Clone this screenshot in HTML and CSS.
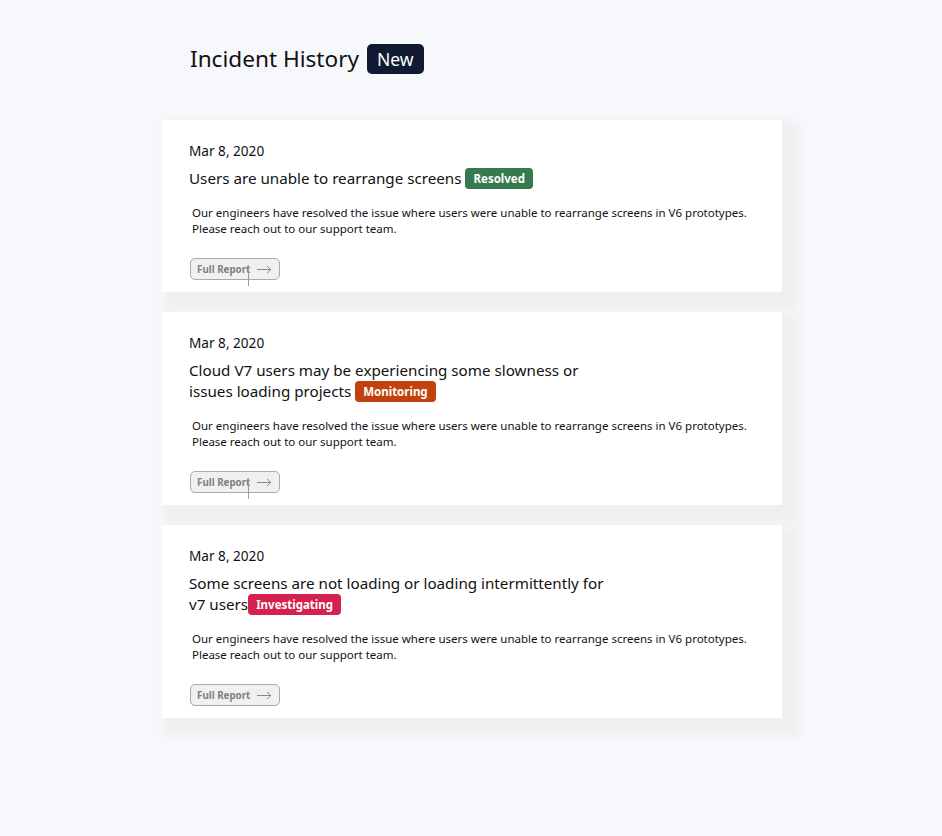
FILE: index.html
```html
<!DOCTYPE html>
<html lang="en">
<head>
  <meta charset="UTF-8">
  <title>Incident History</title>
  <link rel="stylesheet" href="styles.css">
</head>
<body>
  <div class="page">
    <header class="page-header">
      <h1>Incident History</h1>
      <span class="badge-new">New</span>
    </header>

    <div class="incident">
      <div class="date">Mar 8, 2020</div>
      <h2 class="title">Users are unable to rearrange screens <span class="status resolved">Resolved</span></h2>
      <p class="desc">Our engineers have resolved the issue where users were unable to rearrange screens in V6 prototypes.<br>Please reach out to our support team.</p>
      <button class="report">Full Report
        <svg class="arrow" width="15" height="9" viewBox="0 0 15 9"><path d="M0 4.5H14M10 1l3.8 3.5L10 8" fill="none" stroke="#888" stroke-width="1"/></svg>
        <span class="tick"></span>
      </button>
    </div>

    <div class="incident">
      <div class="date">Mar 8, 2020</div>
      <h2 class="title">Cloud V7 users may be experiencing some slowness or issues loading projects <span class="status monitoring">Monitoring</span></h2>
      <p class="desc">Our engineers have resolved the issue where users were unable to rearrange screens in V6 prototypes.<br>Please reach out to our support team.</p>
      <button class="report">Full Report
        <svg class="arrow" width="15" height="9" viewBox="0 0 15 9"><path d="M0 4.5H14M10 1l3.8 3.5L10 8" fill="none" stroke="#888" stroke-width="1"/></svg>
        <span class="tick"></span>
      </button>
    </div>

    <div class="incident">
      <div class="date">Mar 8, 2020</div>
      <h2 class="title">Some screens are not loading or loading intermittently for v7 users<span class="status investigating">Investigating</span></h2>
      <p class="desc">Our engineers have resolved the issue where users were unable to rearrange screens in V6 prototypes.<br>Please reach out to our support team.</p>
      <button class="report">Full Report
        <svg class="arrow" width="15" height="9" viewBox="0 0 15 9"><path d="M0 4.5H14M10 1l3.8 3.5L10 8" fill="none" stroke="#888" stroke-width="1"/></svg>
      </button>
    </div>
  </div>
</body>
</html>
```

FILE: styles.css
```css
* { box-sizing: border-box; margin: 0; padding: 0; }

body {
  font-family: "Noto Sans", Arial, sans-serif;
  background-color: #f7f8fc;
  color: #111;
}

.page {
  width: 620px;
  margin-left: 162px;
  padding-top: 44px;
}

.page-header {
  display: flex;
  align-items: center;
  padding-left: 28px;
  margin-bottom: 46px;
}

.page-header h1 {
  font-size: 22.6px;
  font-weight: normal;
  line-height: 30px;
}

.badge-new {
  margin-left: 8px;
  padding: 0 10px;
  height: 30px;
  line-height: 30px;
  font-size: 17.5px;
  color: #fff;
  background-color: #121a33;
  border-radius: 5px;
}

.incident {
  background-color: #fff;
  padding: 21px 27px 12px;
  margin-bottom: 20px;
  box-shadow: 10px 10px 10px 8px #efefef;
}

.date {
  font-size: 13.6px;
  line-height: 20px;
  margin-bottom: 7px;
}

.title {
  font-size: 15.2px;
  font-weight: normal;
  line-height: 21px;
  max-width: 430px;
}

.status {
  display: inline-block;
  padding: 0 8px;
  font-size: 11.5px;
  font-weight: bold;
  line-height: 21px;
  color: #fff;
  border-radius: 4px;
  vertical-align: top;
}

.resolved { background-color: #357a4f; }
.monitoring { background-color: #c2410c; }
.investigating { background-color: #d4214f; }

.desc {
  font-size: 11.5px;
  line-height: 16px;
  margin: 16px 0 0 3px;
}

.report {
  position: relative;
  display: flex;
  align-items: center;
  margin: 21px 0 0 1px;
  width: 90px;
  height: 22px;
  padding: 0 6px;
  font-family: inherit;
  font-size: 9.8px;
  font-weight: bold;
  color: #808080;
  background-color: #f0f0f0;
  border: 1px solid #aaa;
  border-radius: 5px;
}

.arrow {
  margin-left: auto;
  margin-right: 1px;
}

.tick {
  position: absolute;
  left: 57px;
  top: 6px;
  width: 1px;
  height: 21px;
  background-color: #999;
}
```
